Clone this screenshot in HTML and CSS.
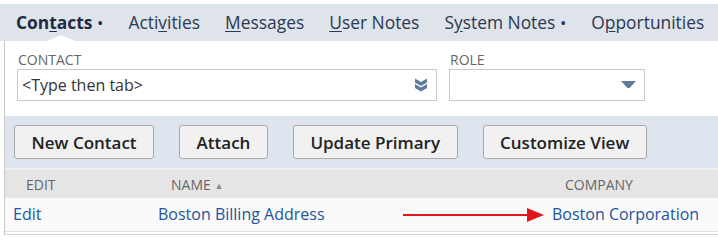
FILE: index.html
```html
<!DOCTYPE html>
<html lang="en">
<head>
    <meta charset="UTF-8">
    <title>Contacts</title>
    <link rel="stylesheet" href="styles.css">
</head>
<body>
    <div class="tabs">
        <span class="tab active">Con<u>t</u>acts <span class="dot">•</span><span class="notch"></span></span>
        <span class="tab">Acti<u>v</u>ities</span>
        <span class="tab"><u>M</u>essages</span>
        <span class="tab"><u>U</u>ser Notes</span>
        <span class="tab">S<u>y</u>stem Notes <span class="dot">•</span></span>
        <span class="tab">O<u>p</u>portunities</span>
    </div>

    <div class="panel">
        <div class="fields">
            <div class="field">
                <label class="field-label">CONTACT</label>
                <div class="field-input contact-input">
                    <span class="placeholder">&lt;Type then tab&gt;</span>
                    <svg class="chevrons" width="14" height="14" viewBox="0 0 14 14">
                        <path d="M1 0.5 L7 4 L13 0.5 L13 4.5 L7 8 L1 4.5 Z" fill="#5f7a9c"/>
                        <path d="M1 6 L7 9.5 L13 6 L13 10 L7 13.5 L1 10 Z" fill="#5f7a9c"/>
                    </svg>
                </div>
            </div>
            <div class="field">
                <label class="field-label">ROLE</label>
                <div class="field-input role-input">
                    <svg class="caret" width="15" height="8" viewBox="0 0 15 8">
                        <path d="M0 0 H15 L8.5 7 H6.5 Z" fill="#5f7a9c"/>
                    </svg>
                </div>
            </div>
        </div>

        <div class="toolbar">
            <button class="btn">New Contact</button>
            <button class="btn">Attach</button>
            <button class="btn">Update Primary</button>
            <button class="btn">Customize View</button>
        </div>

        <table class="list">
            <thead>
                <tr>
                    <th class="col-edit">EDIT</th>
                    <th class="col-name">NAME <span class="sort">▲</span></th>
                    <th class="col-company">COMPANY</th>
                </tr>
            </thead>
            <tbody>
                <tr>
                    <td><a href="#">Edit</a></td>
                    <td><a href="#">Boston Billing Address</a></td>
                    <td><a href="#">Boston Corporation</a></td>
                </tr>
            </tbody>
        </table>

        <svg class="arrow" width="142" height="14" viewBox="0 0 142 14">
            <line x1="0" y1="7" x2="126" y2="7" stroke="#e3161e" stroke-width="2"/>
            <path d="M124 0 L141 7 L124 14 Z" fill="#e3161e"/>
        </svg>
    </div>
</body>
</html>
```

FILE: styles.css
```css
* {
    margin: 0;
    padding: 0;
    box-sizing: border-box;
}

body {
    font-family: 'Open Sans', sans-serif;
    background: white;
    color: #333;
    padding-top: 4px;
}

.tabs {
    display: flex;
    align-items: center;
    height: 37px;
    background: #dfe3ea;
    padding-left: 16px;
    gap: 25px;
    font-size: 17.4px;
    color: #2a3954;
    white-space: nowrap;
}

.tab {
    position: relative;
    line-height: 37px;
}

.tab u {
    text-underline-offset: 2px;
}

.tab.active {
    font-weight: 700;
    color: #1f2b45;
}

.dot {
    font-weight: 400;
    font-size: 17px;
}

.notch {
    position: absolute;
    left: 31px;
    bottom: 0;
    width: 0;
    height: 0;
    border-left: 14px solid transparent;
    border-right: 14px solid transparent;
    border-bottom: 6px solid white;
}

.panel {
    position: relative;
    margin-left: 4px;
    border-left: 1px solid #c8c8c8;
    border-bottom: 1px solid #d5d5d5;
    height: 194px;
}

.fields {
    display: flex;
    gap: 12px;
    padding: 10px 0 0 12px;
    height: 75px;
}

.field-label {
    display: block;
    font-size: 14px;
    color: #666;
    line-height: 18px;
    padding-left: 1px;
}

.field-input {
    display: flex;
    align-items: center;
    justify-content: space-between;
    height: 32px;
    border: 1px solid #c9c9c9;
    background: white;
}

.contact-input {
    width: 420px;
    padding: 0 8px 0 4px;
}

.role-input {
    width: 196px;
    justify-content: flex-end;
    padding-right: 8px;
}

.placeholder {
    font-size: 16px;
    color: #333;
}

.toolbar {
    display: flex;
    gap: 25px;
    background: #dfe5ee;
    height: 54px;
    padding: 9px 0 0 9px;
    border-bottom: 2px solid #eef1f5;
}

.btn {
    font-family: 'Open Sans', sans-serif;
    font-size: 17px;
    font-weight: 600;
    color: #222;
    background: #f1f1f1;
    border: 1px solid #a9a9a9;
    border-radius: 3px;
    height: 34px;
    padding: 0 16.5px;
}

.list {
    width: 100%;
    border-collapse: collapse;
}

.list th {
    text-align: left;
    font-weight: 400;
    font-size: 14px;
    color: #666;
    background: #e5e5e5;
    height: 28px;
    padding-left: 21px;
}

.list th.col-edit {
    width: 145px;
}

.list th.col-name {
    width: 394px;
}

.sort {
    font-size: 9px;
    color: #888;
    vertical-align: 1px;
}

.list td {
    background: #fafafa;
    height: 33px;
    padding-left: 8px;
    font-size: 16px;
    border-bottom: 1px solid #e0e0e0;
}

.list a {
    color: #24549b;
    text-decoration: none;
}

.arrow {
    position: absolute;
    left: 398px;
    top: 167px;
}
```
